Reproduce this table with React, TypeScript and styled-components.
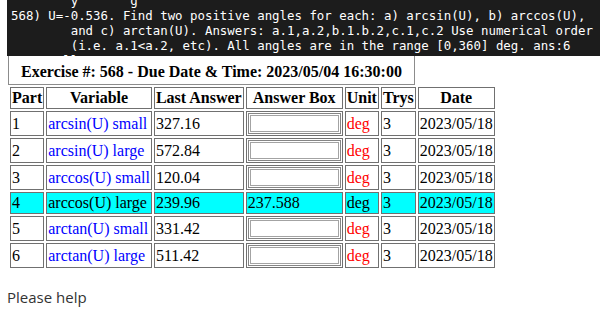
import styled, { createGlobalStyle } from "styled-components";

const GlobalStyle = createGlobalStyle`
  body {
    margin: 0;
    background: #ffffff;
  }
`;

interface Row {
  part: number;
  variable: string;
  last: string;
  answer?: string;
  trys: number;
  date: string;
}

const rows: Row[] = [
  { part: 1, variable: "arcsin(U) small", last: "327.16", trys: 3, date: "2023/05/18" },
  { part: 2, variable: "arcsin(U) large", last: "572.84", trys: 3, date: "2023/05/18" },
  { part: 3, variable: "arccos(U) small", last: "120.04", trys: 3, date: "2023/05/18" },
  { part: 4, variable: "arccos(U) large", last: "239.96", answer: "237.588", trys: 3, date: "2023/05/18" },
  { part: 5, variable: "arctan(U) small", last: "331.42", trys: 3, date: "2023/05/18" },
  { part: 6, variable: "arctan(U) large", last: "511.42", trys: 3, date: "2023/05/18" },
];

// the block is scrolled: only slices of the first and last line show
const codeLines = [
  "        y       g",
  "568) U=-0.536. Find two positive angles for each: a) arcsin(U), b) arccos(U),",
  "        and c) arctan(U). Answers: a.1,a.2,b.1.b.2,c.1,c.2 Use numerical order",
  "        (i.e. a.1<a.2, etc). All angles are in the range [0,360] deg. ans:6",
  "   10 all  UU00 0",
];

const App = () => {
  return (
    <>
      <GlobalStyle />
      <Page>
        <CodeBlock>
          <CodeText>{codeLines.join("\n")}</CodeText>
        </CodeBlock>

        <Exercise>
          <TitleBox>Exercise #: 568 - Due Date &amp; Time: 2023/05/04 16:30:00</TitleBox>
          <Grid>
            <thead>
              <tr>
                <Head>Part</Head>
                <Head>Variable</Head>
                <Head>Last Answer</Head>
                <Head>Answer Box</Head>
                <Head>Unit</Head>
                <Head>Trys</Head>
                <Head>Date</Head>
              </tr>
            </thead>
            <tbody>
              {rows.map((row) => {
                const done = row.answer !== undefined;
                return (
                  <tr key={row.part}>
                    <Cell $done={done}>{row.part}</Cell>
                    <Cell $done={done} $tone={done ? undefined : "blue"}>
                      {row.variable}
                    </Cell>
                    <Cell $done={done}>{row.last}</Cell>
                    <Cell $done={done}>
                      {done ? row.answer : <AnswerInput type="text" />}
                    </Cell>
                    <Cell $done={done} $tone={done ? undefined : "red"}>
                      deg
                    </Cell>
                    <Cell $done={done}>{row.trys}</Cell>
                    <Cell $done={done}>{row.date}</Cell>
                  </tr>
                );
              })}
            </tbody>
          </Grid>
        </Exercise>

        <Comment>Please help</Comment>
      </Page>
    </>
  );
};

export default App;

const Page = styled.div`
  padding-left: 7px;
`;

const CodeBlock = styled.div`
  width: 593px;
  height: 56px;
  overflow: hidden;
  background: #1c1c1c;
`;

const CodeText = styled.pre`
  margin: -7px 0 0 0;
  padding-left: 4px;
  font-family: "DejaVu Sans Mono", "Liberation Mono", monospace;
  font-size: 12.4px;
  line-height: 15px;
  color: #ffffff;
  white-space: pre;
`;

const Exercise = styled.div`
  margin-left: 1px;
  font-family: "Liberation Serif", "Times New Roman", serif;
`;

const TitleBox = styled.div`
  width: 405px;
  height: 25px;
  border: 1px solid #8c8c8c;
  border-top: none;
  display: flex;
  align-items: center;
  justify-content: center;
  padding-top: 3px;
  box-sizing: content-box;
  font-size: 16px;
  font-weight: bold;
  color: #000000;
  white-space: nowrap;
`;

const Grid = styled.table`
  border-collapse: separate;
  border-spacing: 2px;
  font-size: 16px;
  color: #000000;
`;

const Head = styled.th`
  border: 1px solid #707070;
  padding: 1px;
  font-weight: bold;
  text-align: center;
  white-space: nowrap;
`;

const Cell = styled.td<{ $done: boolean; $tone?: "blue" | "red" }>`
  border: 1px solid #707070;
  padding: 1px;
  text-align: left;
  vertical-align: middle;
  white-space: nowrap;
  background: ${(p) => (p.$done ? "#00ffff" : "transparent")};
  color: ${(p) =>
    p.$tone === "blue" ? "#0000ff" : p.$tone === "red" ? "#ff0000" : "#000000"};
`;

const AnswerInput = styled.input`
  display: block;
  box-sizing: border-box;
  width: 93px;
  height: 21px;
  margin: 0;
  padding: 0 2px;
  border: 1px solid #858585;
  box-shadow: inset 0 0 0 1px #ffffff, inset 0 0 0 2px #a3a3a3;
  background: #ffffff;
  font-family: "Liberation Serif", serif;
  font-size: 14px;
`;

const Comment = styled.p`
  margin: 16px 0 0 0;
  font-family: "Open Sans", "Noto Sans", sans-serif;
  font-size: 15px;
  line-height: 22px;
  color: #333333;
`;
